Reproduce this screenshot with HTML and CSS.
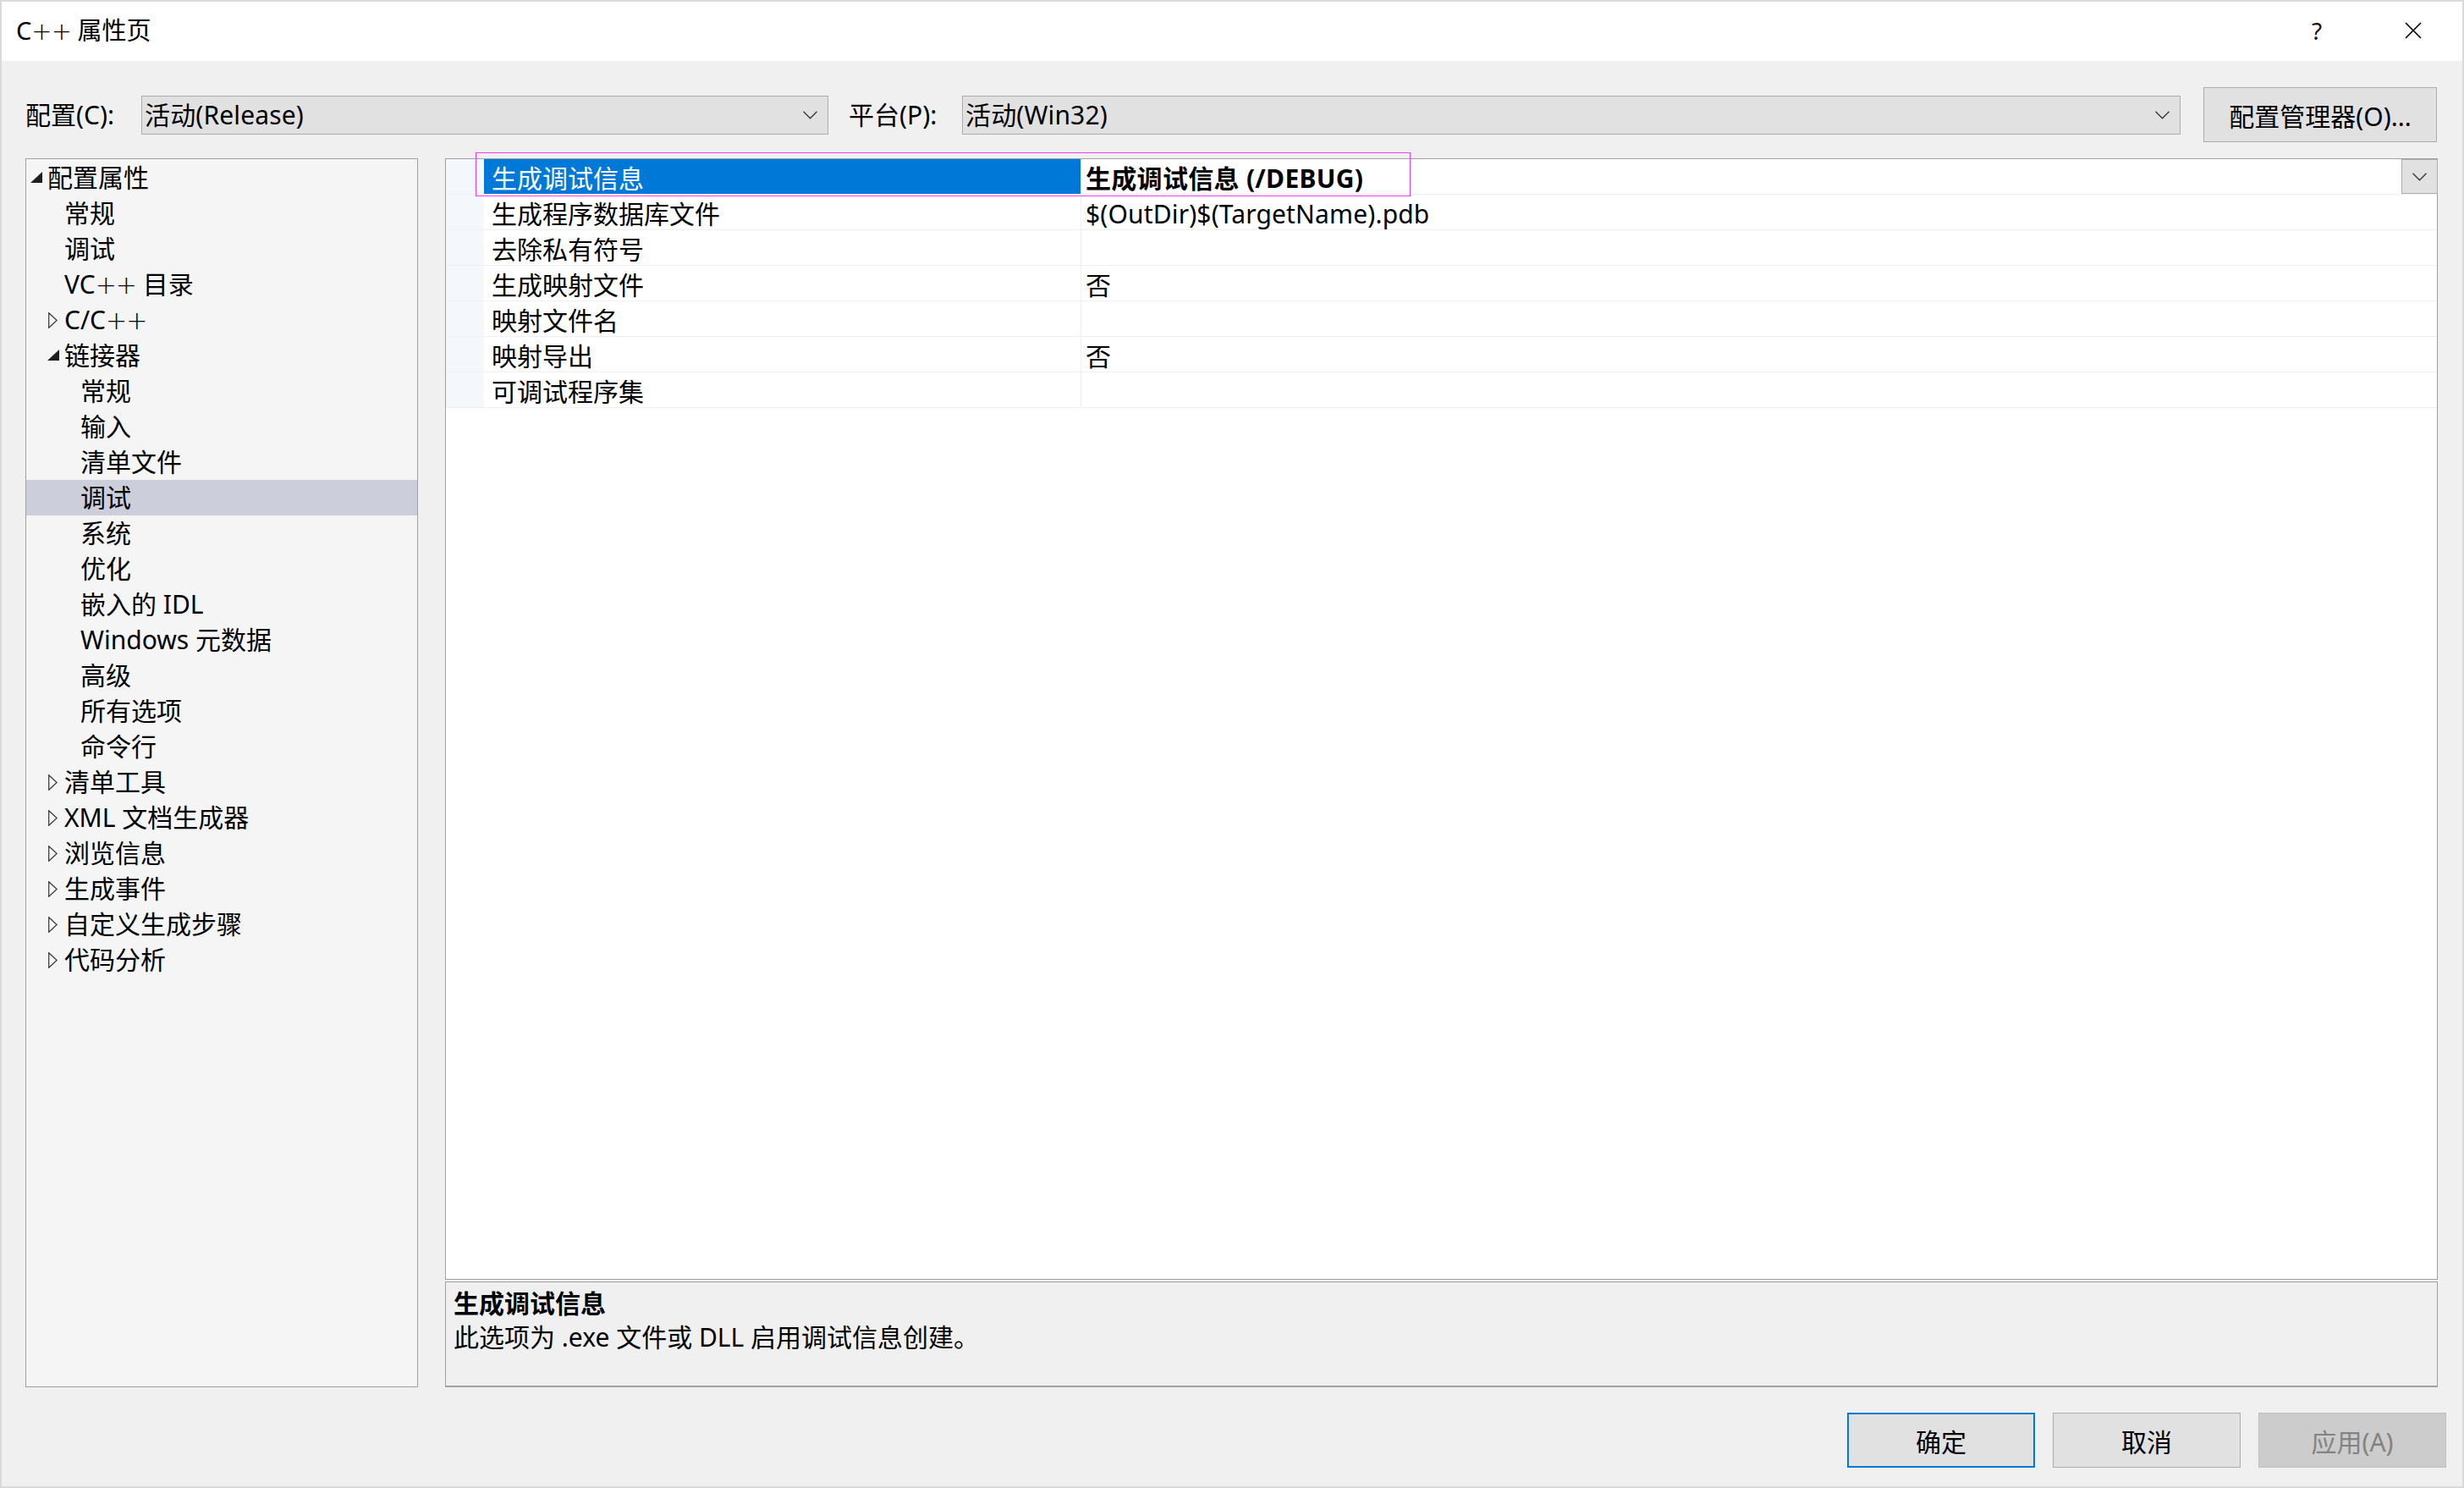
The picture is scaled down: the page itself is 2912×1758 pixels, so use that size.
FILE: index.html
```html
<!DOCTYPE html>
<html lang="zh-CN">
<head>
<meta charset="utf-8">
<title>C++ 属性页</title>
<link rel="stylesheet" href="styles.css">
</head>
<body>
<div class="window">
  <div class="titlebar">
    <span class="title">C<span class="plus">++</span> 属性页</span>
    <div class="tb-buttons">
      <span class="help">?</span>
      <svg class="close" width="20" height="20" viewBox="0 0 20 20"><path d="M1 1 L19 19 M19 1 L1 19" stroke="#000" stroke-width="1.6" fill="none"/></svg>
    </div>
  </div>

  <div class="config-row">
    <span class="lbl lbl-config">配置(C):</span>
    <div class="combo combo-config">
      <span class="combo-text">活动(Release)</span>
      <svg class="chev" width="17" height="10" viewBox="0 0 17 10"><polyline points="0.5,0.8 8.5,8.8 16.5,0.8" stroke="#333" stroke-width="1.3" fill="none"/></svg>
    </div>
    <span class="lbl lbl-platform">平台(P):</span>
    <div class="combo combo-platform">
      <span class="combo-text">活动(Win32)</span>
      <svg class="chev" width="17" height="10" viewBox="0 0 17 10"><polyline points="0.5,0.8 8.5,8.8 16.5,0.8" stroke="#333" stroke-width="1.3" fill="none"/></svg>
    </div>
    <button class="btn btn-manager">配置管理器(O)...</button>
  </div>

  <div class="main">
    <div class="tree">
      <div class="node l0"><span class="exp"><svg class="tri-open" width="14" height="13" viewBox="0 0 14 13"><polygon points="14,0 14,13 0,13" fill="#1e1e1e"/></svg></span><span class="txt">配置属性</span></div>
      <div class="node l1"><span class="exp"></span><span class="txt">常规</span></div>
      <div class="node l1"><span class="exp"></span><span class="txt">调试</span></div>
      <div class="node l1"><span class="exp"></span><span class="txt">VC<span class="plus">++</span> 目录</span></div>
      <div class="node l1"><span class="exp"><svg class="tri-closed" width="11" height="19" viewBox="0 0 11 19"><polygon points="0.7,0.7 10.2,9.5 0.7,18.3" fill="none" stroke="#333" stroke-width="1.2"/></svg></span><span class="txt">C/C<span class="plus">++</span></span></div>
      <div class="node l1"><span class="exp"><svg class="tri-open" width="14" height="13" viewBox="0 0 14 13"><polygon points="14,0 14,13 0,13" fill="#1e1e1e"/></svg></span><span class="txt">链接器</span></div>
      <div class="node l2"><span class="exp"></span><span class="txt">常规</span></div>
      <div class="node l2"><span class="exp"></span><span class="txt">输入</span></div>
      <div class="node l2"><span class="exp"></span><span class="txt">清单文件</span></div>
      <div class="node l2 selected"><span class="exp"></span><span class="txt">调试</span></div>
      <div class="node l2"><span class="exp"></span><span class="txt">系统</span></div>
      <div class="node l2"><span class="exp"></span><span class="txt">优化</span></div>
      <div class="node l2"><span class="exp"></span><span class="txt">嵌入的 IDL</span></div>
      <div class="node l2"><span class="exp"></span><span class="txt">Windows 元数据</span></div>
      <div class="node l2"><span class="exp"></span><span class="txt">高级</span></div>
      <div class="node l2"><span class="exp"></span><span class="txt">所有选项</span></div>
      <div class="node l2"><span class="exp"></span><span class="txt">命令行</span></div>
      <div class="node l1"><span class="exp"><svg class="tri-closed" width="11" height="19" viewBox="0 0 11 19"><polygon points="0.7,0.7 10.2,9.5 0.7,18.3" fill="none" stroke="#333" stroke-width="1.2"/></svg></span><span class="txt">清单工具</span></div>
      <div class="node l1"><span class="exp"><svg class="tri-closed" width="11" height="19" viewBox="0 0 11 19"><polygon points="0.7,0.7 10.2,9.5 0.7,18.3" fill="none" stroke="#333" stroke-width="1.2"/></svg></span><span class="txt">XML 文档生成器</span></div>
      <div class="node l1"><span class="exp"><svg class="tri-closed" width="11" height="19" viewBox="0 0 11 19"><polygon points="0.7,0.7 10.2,9.5 0.7,18.3" fill="none" stroke="#333" stroke-width="1.2"/></svg></span><span class="txt">浏览信息</span></div>
      <div class="node l1"><span class="exp"><svg class="tri-closed" width="11" height="19" viewBox="0 0 11 19"><polygon points="0.7,0.7 10.2,9.5 0.7,18.3" fill="none" stroke="#333" stroke-width="1.2"/></svg></span><span class="txt">生成事件</span></div>
      <div class="node l1"><span class="exp"><svg class="tri-closed" width="11" height="19" viewBox="0 0 11 19"><polygon points="0.7,0.7 10.2,9.5 0.7,18.3" fill="none" stroke="#333" stroke-width="1.2"/></svg></span><span class="txt">自定义生成步骤</span></div>
      <div class="node l1"><span class="exp"><svg class="tri-closed" width="11" height="19" viewBox="0 0 11 19"><polygon points="0.7,0.7 10.2,9.5 0.7,18.3" fill="none" stroke="#333" stroke-width="1.2"/></svg></span><span class="txt">代码分析</span></div>
    </div>

    <div class="right">
      <div class="grid">
        <div class="prow selected">
          <div class="gutter"></div>
          <div class="pname">生成调试信息</div>
          <div class="pval bold"><span class="vtext">生成调试信息 (/DEBUG)</span>
            <div class="dd"><svg width="17" height="10" viewBox="0 0 17 10"><polyline points="0.5,0.8 8.5,8.8 16.5,0.8" stroke="#333" stroke-width="1.3" fill="none"/></svg></div>
          </div>
        </div>
        <div class="prow"><div class="gutter"></div><div class="pname">生成程序数据库文件</div><div class="pval"><span class="vtext">$(OutDir)$(TargetName).pdb</span></div></div>
        <div class="prow"><div class="gutter"></div><div class="pname">去除私有符号</div><div class="pval"></div></div>
        <div class="prow"><div class="gutter"></div><div class="pname">生成映射文件</div><div class="pval"><span class="vtext">否</span></div></div>
        <div class="prow"><div class="gutter"></div><div class="pname">映射文件名</div><div class="pval"></div></div>
        <div class="prow"><div class="gutter"></div><div class="pname">映射导出</div><div class="pval"><span class="vtext">否</span></div></div>
        <div class="prow"><div class="gutter"></div><div class="pname">可调试程序集</div><div class="pval"></div></div>
      </div>
      <div class="desc">
        <div class="desc-title">生成调试信息</div>
        <div class="desc-text">此选项为 .exe 文件或 DLL 启用调试信息创建。</div>
      </div>
    </div>
  </div>

  <div class="footer">
    <button class="btn btn-foot btn-default">确定</button>
    <button class="btn btn-foot">取消</button>
    <button class="btn btn-foot btn-disabled">应用(A)</button>
  </div>

  <div class="focus-rect"></div>
</div>
</body>
</html>
```

FILE: styles.css
```css
* { box-sizing: border-box; }

html, body {
  margin: 0;
  padding: 0;
}

body {
  width: 2912px;
  height: 1758px;
  overflow: hidden;
  background: #f0f0f0;
  font-family: "Noto Sans", "Noto Sans CJK SC", sans-serif;
  font-size: 30px;
  color: #000;
}

.plus {
  font-family: "DejaVu Sans", sans-serif;
  font-weight: 300;
  letter-spacing: -1px;
}

.window {
  position: relative;
  width: 2912px;
  height: 1758px;
  border: 2px solid #dadada;
  background: #f0f0f0;
  display: flex;
  flex-direction: column;
}

/* title bar */
.titlebar {
  height: 70px;
  background: #fff;
  display: flex;
  align-items: center;
  justify-content: space-between;
  padding-left: 17px;
  flex-shrink: 0;
}
.title {
  font-size: 29px;
  line-height: 40px;
  margin-top: -2px;
}
.tb-buttons {
  display: flex;
  align-items: center;
  margin-top: -2px;
}
.help {
  font-size: 28px;
  line-height: 34px;
  width: 14px;
  margin-right: 96px;
  font-family: "Noto Sans", sans-serif;
  font-weight: 400;
  color: #111;
}
.close {
  margin-right: 48px;
}

/* config row */
.config-row {
  display: flex;
  align-items: center;
  height: 65px;
  margin-top: 31px;
  padding-left: 28px;
  flex-shrink: 0;
}
.lbl {
  line-height: 42px;
  white-space: nowrap;
}
.lbl-config { width: 137px; }
.lbl-platform { width: 134px; margin-left: 24px; }

.combo {
  height: 46px;
  background: #e1e1e1;
  border: 1px solid #adadad;
  display: flex;
  align-items: center;
  justify-content: space-between;
  padding-left: 3px;
  padding-right: 12px;
}
.combo-config { width: 812px; }
.combo-platform { width: 1440px; }
.combo-text { line-height: 42px; letter-spacing: 0.15px; }
.chev { display: block; }

.btn {
  font-family: "Noto Sans", "Noto Sans CJK SC", sans-serif;
  font-size: 30px;
  color: #000;
  background: #e1e1e1;
  border: 1px solid #adadad;
  padding: 0;
  display: flex;
  align-items: center;
  justify-content: center;
}
.btn-manager {
  width: 276px;
  height: 65px;
  margin-left: 27px;
}

/* main */
.main {
  display: flex;
  margin-top: 19px;
  padding-left: 28px;
  height: 1452px;
  flex-shrink: 0;
}

.tree {
  width: 464px;
  height: 1452px;
  background: #f5f5f5;
  border: 1px solid #a0a0a0;
  padding-top: 1px;
}
.node {
  height: 42px;
  display: flex;
  align-items: center;
  white-space: nowrap;
}
.node.l0 { padding-left: 3px; }
.node.l1 { padding-left: 23px; }
.node.l2 { padding-left: 42px; }
.node.selected { background: #cccedb; }
.exp {
  width: 22px;
  height: 42px;
  display: flex;
  align-items: center;
  flex-shrink: 0;
}
.tri-open { margin-left: 2px; margin-top: -1px; }
.tri-closed { margin-left: 3px; }
.txt { line-height: 42px; }

.right {
  margin-left: 32px;
  width: 2355px;
  display: flex;
  flex-direction: column;
}

.grid {
  height: 1325px;
  background: #fff;
  border: 1px solid #a0a0a0;
}
.prow {
  height: 42px;
  display: flex;
  border-bottom: 1px solid #f0f0f0;
}
.gutter {
  width: 45px;
  background: #f4f7fc;
  flex-shrink: 0;
}
.pname {
  width: 706px;
  flex-shrink: 0;
  padding-left: 9px;
  padding-top: 4px;
  line-height: 37px;
  border-right: 1px solid #f0f0f0;
  white-space: nowrap;
}
.pval {
  flex: 1;
  padding-left: 5px;
  display: flex;
  align-items: center;
  white-space: nowrap;
}
.vtext {
  line-height: 37px;
  padding-top: 4px;
  letter-spacing: 0.15px;
}
.pval.bold { font-weight: 700; }
.pval.bold .vtext { letter-spacing: 0.3px; }
.prow.selected .pname {
  background: #0078d7;
  color: #fff;
}
.dd {
  margin-left: auto;
  width: 43px;
  height: 41px;
  background: #e1e1e1;
  border: 1px solid #adadad;
  display: flex;
  align-items: center;
  justify-content: center;
  margin-right: -1px;
}

.desc {
  margin-top: 2px;
  height: 125px;
  border: 1px solid #a0a0a0;
  border-bottom-width: 2px;
  background: #f0f0f0;
  padding: 5px 9px 0;
}
.desc-title {
  font-weight: 700;
  line-height: 40px;
}
.desc-text {
  line-height: 40px;
}

/* footer */
.footer {
  display: flex;
  justify-content: flex-end;
  gap: 21px;
  padding-right: 19px;
  margin-top: 30px;
}
.btn-foot {
  width: 222px;
  height: 65px;
}
.btn-default {
  border: 2px solid #0078d7;
}
.btn-disabled {
  background: #cccccc;
  border-color: #bfbfbf;
  color: #838383;
}

/* magenta focus annotation */
.focus-rect {
  position: absolute;
  left: 560px;
  top: 178px;
  width: 1105px;
  height: 52px;
  border: 1px solid #f03cf0;
  pointer-events: none;
}
```
